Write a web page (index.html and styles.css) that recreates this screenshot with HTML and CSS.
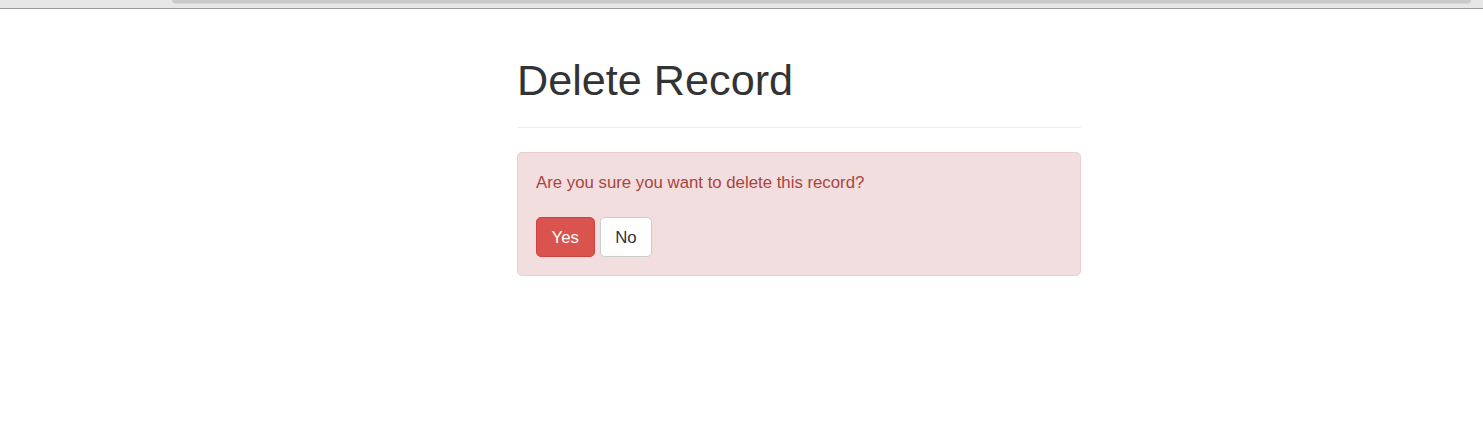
FILE: index.html
```html
<!DOCTYPE html>
<html>
<head>
<meta charset="utf-8">
<title>Delete Record</title>
<link rel="stylesheet" href="styles.css">
</head>
<body>
<div class="chrome"><div class="chrome-tab"></div></div>
<div class="wrapper">
  <div class="page-header">
    <h1>Delete Record</h1>
  </div>
  <form class="alert">
    <p class="msg">Are you sure you want to delete this record?</p>
    <div class="actions">
      <button type="button" class="btn btn-danger">Yes</button>
      <button type="button" class="btn btn-default">No</button>
    </div>
  </form>
</div>
</body>
</html>
```
FILE: styles.css
```css
html, body {
  margin: 0;
  padding: 0;
  background: #fff;
}
body {
  font-family: "Liberation Sans", Arial, Helvetica, sans-serif;
  font-size: 16.8px;
  line-height: 24px;
  color: #333;
}
.chrome {
  height: 8px;
  background: #e6e6e6;
  border-bottom: 1px solid #9a9a9a;
  padding-left: 172px;
  padding-right: 12px;
}
.chrome-tab {
  height: 3px;
  background: #c9c9c9;
  border-bottom: 1px solid #d6d6d6;
  border-radius: 0 0 4px 4px;
}
.wrapper {
  width: 564px;
  margin-left: 517px;
}
.page-header {
  margin-top: 48px;
  margin-bottom: 24px;
  padding-bottom: 10.8px;
  border-bottom: 1px solid #eee;
}
.page-header h1 {
  margin: 0 0 12px;
  font-size: 43.2px;
  line-height: 47.5px;
  font-weight: 500;
  color: #333;
}
.alert {
  margin: 0;
  padding: 18px;
  background: #f2dede;
  border: 1px solid #ebccd1;
  border-radius: 5px;
  color: #a94442;
}
.msg {
  margin: 0 0 22px;
}
.actions {
  display: flex;
  gap: 5px;
}
.btn {
  font-family: inherit;
  font-size: 16.8px;
  line-height: 24px;
  padding: 7.5px 14.6px 6.5px;
  border: 1px solid transparent;
  border-radius: 5px;
  margin: 0;
  cursor: pointer;
}
.btn-danger {
  background: #d9534f;
  border-color: #d43f3a;
  color: #fff;
}
.btn-default {
  background: #fff;
  border-color: #ccc;
  color: #333;
}
```
